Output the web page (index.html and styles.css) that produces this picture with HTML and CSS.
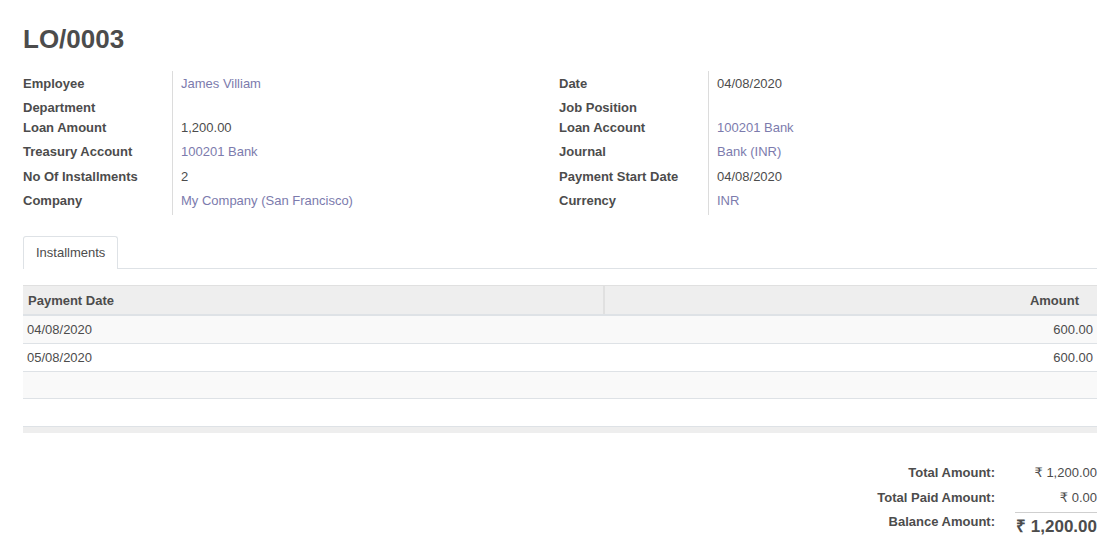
FILE: index.html
```html
<!DOCTYPE html>
<html>
<head>
<meta charset="utf-8">
<link rel="stylesheet" href="styles.css">
</head>
<body>
<div class="sheet">
  <h1 class="title">LO/0003</h1>
  <div class="groups">
    <div class="group">
      <div class="lbl">Employee</div><div class="val"><a class="link">James Villiam</a></div>
      <div class="lbl">Department</div><div class="val"></div>
      <div class="lbl">Loan Amount</div><div class="val">1,200.00</div>
      <div class="lbl">Treasury Account</div><div class="val"><a class="link">100201 Bank</a></div>
      <div class="lbl">No Of Installments</div><div class="val">2</div>
      <div class="lbl">Company</div><div class="val"><a class="link">My Company (San Francisco)</a></div>
    </div>
    <div class="group">
      <div class="lbl">Date</div><div class="val">04/08/2020</div>
      <div class="lbl">Job Position</div><div class="val"></div>
      <div class="lbl">Loan Account</div><div class="val"><a class="link">100201 Bank</a></div>
      <div class="lbl">Journal</div><div class="val"><a class="link">Bank (INR)</a></div>
      <div class="lbl">Payment Start Date</div><div class="val">04/08/2020</div>
      <div class="lbl">Currency</div><div class="val"><a class="link">INR</a></div>
    </div>
  </div>

  <div class="tabs">
    <div class="tab">Installments</div>
  </div>

  <table class="lines">
    <thead>
      <tr><th class="c-date">Payment Date</th><th class="c-amt">Amount</th></tr>
    </thead>
    <tbody>
      <tr class="odd"><td>04/08/2020</td><td class="num">600.00</td></tr>
      <tr><td>05/08/2020</td><td class="num">600.00</td></tr>
      <tr class="odd empty"><td></td><td></td></tr>
      <tr><td></td><td></td></tr>
    </tbody>
    <tfoot>
      <tr><td colspan="2"></td></tr>
    </tfoot>
  </table>

  <div class="totals">
    <div class="tl">Total Amount:</div><div class="tv"><span class="cur">₹</span> 1,200.00</div>
    <div class="tl">Total Paid Amount:</div><div class="tv"><span class="cur">₹</span> 0.00</div>
    <div class="tl bal">Balance Amount:</div><div class="tv balv">₹ 1,200.00</div>
  </div>
</div>
</body>
</html>
```
FILE: styles.css
```css
html, body {
  margin: 0;
  padding: 0;
  background: #fff;
}
body {
  font-family: "Liberation Sans", Arial, sans-serif;
  font-size: 13px;
  color: #4c4c4c;
}
.sheet {
  padding: 24px 23px 0 23px;
}
.title {
  margin: 0;
  font-size: 26px;
  line-height: 31px;
  font-weight: bold;
  color: #4c4c4c;
}
.groups {
  display: grid;
  grid-template-columns: 536px 1fr;
  margin-top: 16px;
}
.group {
  display: grid;
  grid-template-columns: 149px 1fr;
  grid-template-rows: 24px 24px 16px 32px 18px 30px;
}
.lbl {
  font-weight: bold;
  display: flex;
  align-items: center;
}
.val {
  border-left: 1px solid #dcdcdc;
  padding-left: 8px;
  display: flex;
  align-items: center;
}
.link {
  color: #7c7bad;
  text-decoration: none;
}
.tabs {
  margin-top: 21px;
  border-bottom: 1px solid #dee2e6;
  display: flex;
  height: 32px;
}
.tab {
  border: 1px solid #dee2e6;
  border-bottom: none;
  border-radius: 3px 3px 0 0;
  padding: 0 12px;
  background: #fff;
  line-height: 31px;
  box-sizing: border-box;
  margin-bottom: -1px;
  height: 33px;
}
.lines {
  width: 100%;
  border-collapse: collapse;
  margin-top: 16px;
}
.lines thead th {
  background: #eeeeee;
  border-top: 1px solid #e0e0e0;
  border-bottom: 2px solid #dee2e6;
  height: 28px;
  padding: 0 5px;
  font-weight: bold;
  text-align: left;
}
.lines th.c-date {
  width: 570px;
  border-right: 2px solid #e0e0e0;
}
.lines th.c-amt {
  text-align: right;
  padding-right: 18px;
}
.lines tbody td {
  height: 27px;
  padding: 0 4px;
  border-bottom: 1px solid #dee2e6;
}
.lines tbody tr.empty td {
  height: 26px;
}
.lines tbody tr.odd td {
  background: #f9f9f9;
}
.lines td.num {
  text-align: right;
}
.lines tfoot td {
  height: 6px;
  padding: 0;
  background: #eeeeee;
}
.totals {
  display: grid;
  grid-template-columns: 1fr 82px;
  column-gap: 20px;
  margin-top: 29px;
  grid-template-rows: 25px 25px 29px;
}
.tl {
  text-align: right;
  font-weight: bold;
  padding-top: 3px;
  white-space: nowrap;
}
.tv {
  text-align: right;
  padding-top: 3px;
  white-space: nowrap;
}
.cur {
  font-family: "DejaVu Sans", sans-serif;
}
.bal {
  padding-top: 2px;
}
.balv {
  border-top: 1px solid #cfcfcf;
  font-size: 17px;
  font-weight: bold;
  padding-top: 1px;
}
```
